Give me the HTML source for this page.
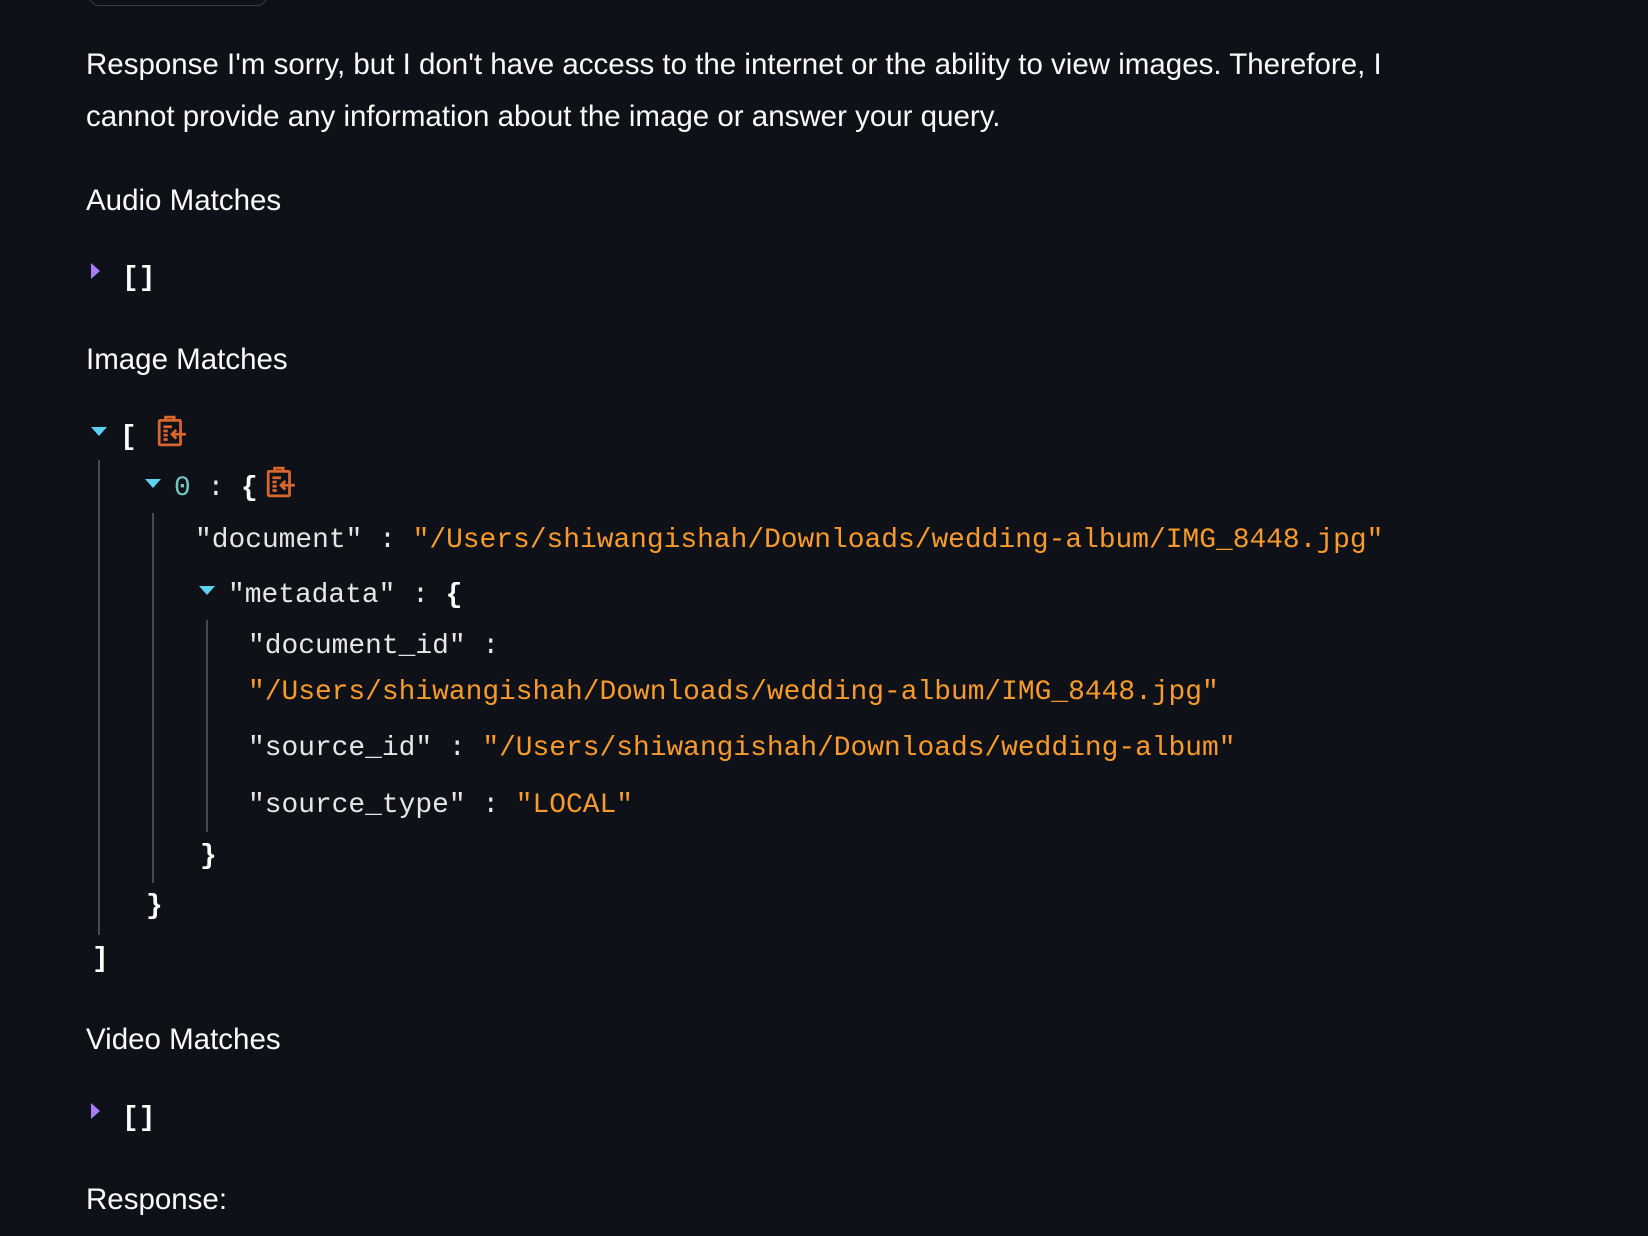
<!DOCTYPE html>
<html><head><meta charset="utf-8"><style>
body{margin:0;width:1648px;height:1236px;background:#0e1117;overflow:hidden;position:relative;font-family:"Liberation Sans",sans-serif;color:#fafafa}
.t{position:absolute;white-space:nowrap;line-height:40px;font-size:29.5px;margin-top:2px}
.m{position:absolute;white-space:nowrap;line-height:40px;font-family:"Liberation Mono",monospace;font-size:27.9px;color:#e6e6e6}
.s{color:#f99b2c}.w{color:#fff;font-weight:bold}.n{color:#73c8c2}
.vl{position:absolute;width:2px;background:#4a4a48}
.dt{position:absolute;width:0;height:0;border-left:8px solid transparent;border-right:8px solid transparent;border-top:9px solid #5cd1f0}
.rt{position:absolute;width:0;height:0;border-top:8px solid transparent;border-bottom:8px solid transparent;border-left:9px solid #a67cf8}
svg{position:absolute}
</style></head><body>
<div style="position:absolute;left:89px;top:-30px;width:176px;height:34px;border:1.5px solid #3a3d45;border-radius:10px"></div>
<div class="t" style="left:86px;top:43px">Response I'm sorry, but I don't have access to the internet or the ability to view images. Therefore, I</div>
<div class="t" style="left:86px;top:95px">cannot provide any information about the image or answer your query.</div>
<div class="t" style="left:86px;top:179px">Audio Matches</div>
<div class="rt" style="left:91px;top:263px"></div>
<div class="m w" style="left:122px;top:259px">[]</div>
<div class="t" style="left:86px;top:338px">Image Matches</div>
<div class="dt" style="left:91px;top:427px"></div>
<div class="m w" style="left:120px;top:418px">[</div>
<svg style="left:157px;top:415px" width="30" height="32" viewBox="0 0 28 30"><g fill="none" stroke="#d9662f" stroke-width="2.6"><rect x="2" y="5" width="20" height="23" rx="1"/><path d="M8 5V2h8v3"/><path d="M6 11h8M6 15h4M6 19h4M6 23h4"/><path d="M27 18H14M18 14l-4 4 4 4"/></g></svg>
<div class="vl" style="left:98px;top:460px;height:475px"></div>
<div class="dt" style="left:145px;top:479px"></div>
<div class="m" style="left:174px;top:469px"><span class="n">0</span> : <span class="w">{</span></div>
<svg style="left:266px;top:466px" width="30" height="32" viewBox="0 0 28 30"><g fill="none" stroke="#d9662f" stroke-width="2.6"><rect x="2" y="5" width="20" height="23" rx="1"/><path d="M8 5V2h8v3"/><path d="M6 11h8M6 15h4M6 19h4M6 23h4"/><path d="M27 18H14M18 14l-4 4 4 4"/></g></svg>
<div class="vl" style="left:152px;top:513px;height:370px"></div>
<div class="m" style="left:195px;top:521px">"document" : <span class="s">"/Users/shiwangishah/Downloads/wedding-album/IMG_8448.jpg"</span></div>
<div class="dt" style="left:199px;top:586px"></div>
<div class="m" style="left:228px;top:576px">"metadata" : <span class="w">{</span></div>
<div class="vl" style="left:206px;top:620px;height:212px"></div>
<div class="m" style="left:248px;top:627px">"document_id" :</div>
<div class="m s" style="left:248px;top:673px">"/Users/shiwangishah/Downloads/wedding-album/IMG_8448.jpg"</div>
<div class="m" style="left:248px;top:729px">"source_id" : <span class="s">"/Users/shiwangishah/Downloads/wedding-album"</span></div>
<div class="m" style="left:248px;top:786px">"source_type" : <span class="s">"LOCAL"</span></div>
<div class="m w" style="left:200px;top:837px">}</div>
<div class="m w" style="left:146px;top:887px">}</div>
<div class="m w" style="left:92px;top:940px">]</div>
<div class="t" style="left:86px;top:1018px">Video Matches</div>
<div class="rt" style="left:91px;top:1103px"></div>
<div class="m w" style="left:122px;top:1099px">[]</div>
<div class="t" style="left:86px;top:1178px">Response:</div>
</body></html>
